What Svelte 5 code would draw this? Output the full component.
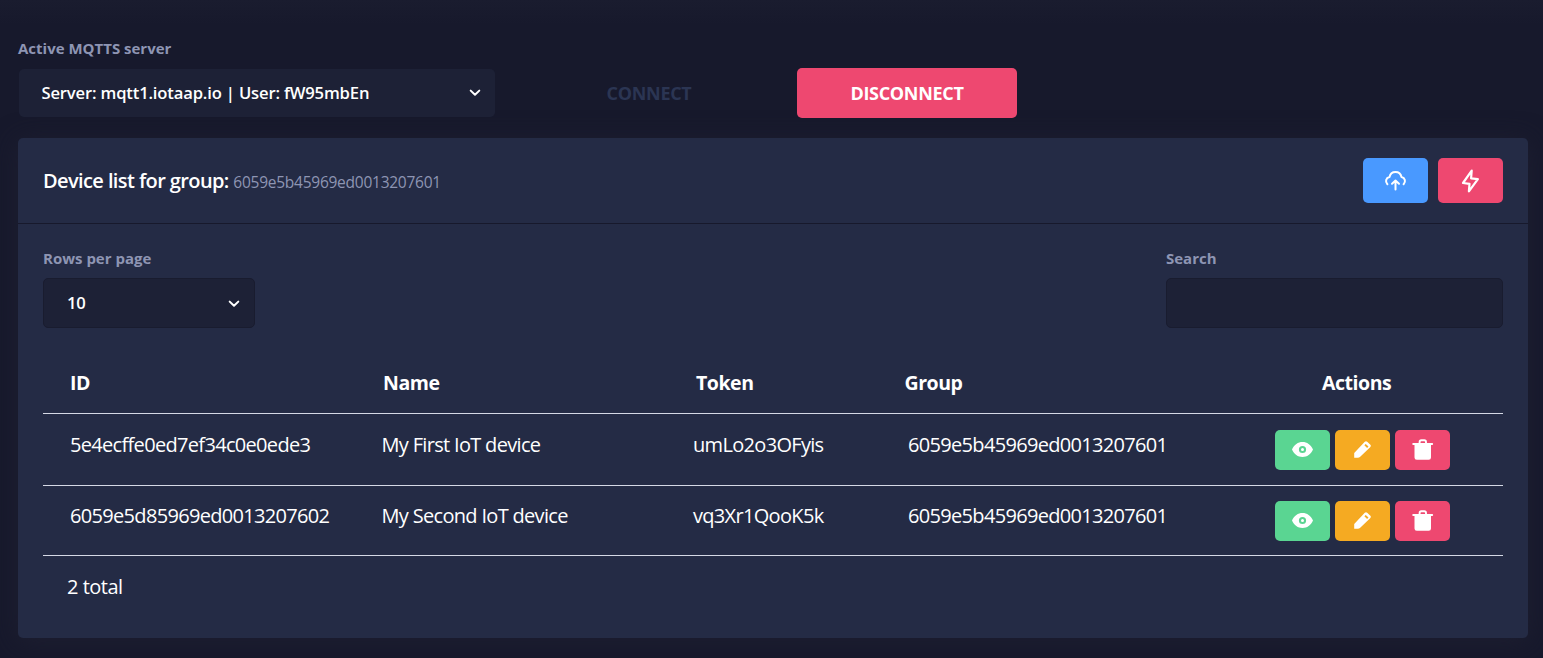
<script>
  const columns = ['ID', 'Name', 'Token', 'Group', 'Actions'];
  const devices = [
    { id: '5e4ecffe0ed7ef34c0e0ede3', name: 'My First IoT device', token: 'umLo2o3OFyis', group: '6059e5b45969ed0013207601' },
    { id: '6059e5d85969ed0013207602', name: 'My Second IoT device', token: 'vq3Xr1QooK5k', group: '6059e5b45969ed0013207601' }
  ];
</script>

{#snippet chevron()}
  <svg class="chevron" viewBox="0 0 12 8" width="12" height="8"><path d="M1.7 1.6 6 5.8l4.3-4.2" fill="none" stroke="#fff" stroke-width="2" stroke-linecap="round" stroke-linejoin="round" /></svg>
{/snippet}

<div class="page">
  <div class="label server-label">Active MQTTS server</div>
  <div class="connection">
    <button class="select server"><span>Server: mqtt1.iotaap.io | User: fW95mbEn</span> {@render chevron()}</button>
    <button class="connect" disabled>CONNECT</button>
    <button class="disconnect">DISCONNECT</button>
  </div>

  <section class="card">
    <header>
      <h1>Device list for group: <small>6059e5b45969ed0013207601</small></h1>
      <div class="tools">
        <button class="tool blue" aria-label="Upload">
          <svg viewBox="0 0 24 24" width="24" height="24" fill="none" stroke="#fff" stroke-width="2" stroke-linecap="round" stroke-linejoin="round">
            <path d="M3.4 15.2C1 12.700 1.800 8.800 5.500 8.100 6.200 4.700 8.800 3 11.500 3s5.300 1.700 6 5.100c3.700.7 4.500 4.600 2.100 7.100M11.500 20.500v-8.300M8 14.800 11.500 11.500l3.500 3.300" />
          </svg>
        </button>
        <button class="tool pink" aria-label="Flash">
          <svg viewBox="0 0 24 24" width="24" height="24" fill="none" stroke="#fff" stroke-width="2.2" stroke-linecap="round" stroke-linejoin="round">
            <path d="M12.700 1.700 4 14l6.500.9-.6 7.400L18.900 10.200l-6.800-.8z" />
          </svg>
        </button>
      </div>
    </header>

    <div class="filters">
      <div>
        <div class="label">Rows per page</div>
        <button class="select rows"><span>10</span> {@render chevron()}</button>
      </div>
      <div>
        <div class="label">Search</div>
        <input class="search" aria-label="Search" />
      </div>
    </div>

    <div class="table">
      <div class="row head">
        {#each columns as column}<div>{column}</div>{/each}
      </div>
      {#each devices as device}
        <div class="row body">
          <div>{device.id}</div>
          <div>{device.name}</div>
          <div>{device.token}</div>
          <div>{device.group}</div>
          <div class="actions">
            <button class="green" aria-label="View">
              <svg viewBox="0 0 22 16" width="22" height="16"><path fill="#fff" fill-rule="evenodd" d="M0 7.500C2.200 2.700 6 .1 10.500.1S18.800 2.700 21 7.500C18.800 12.300 15.100 15 10.500 15S2.200 12.300 0 7.500zM10.500 3.900a3.600 3.600 0 1 0 0 7.200 3.600 3.600 0 0 0 0-7.200z" /><circle cx="10.500" cy="7.500" r="1.500" fill="#fff" /></svg>
            </button>
            <button class="orange" aria-label="Edit">
              <svg viewBox="0 0 20 20" width="20" height="20"><path fill="#fff" fill-rule="evenodd" d="M1.200 17.800V13L11.800 1.700q1.200-1.100 2.400 0l3.200 3q1 1.100 0 2.300L7.200 16.800q-1 1-2.500 1zM12.700 4l-1.300 1.300 2.700 2.700 1.400-1.400z" /></svg>
            </button>
            <button class="pink" aria-label="Delete">
              <svg viewBox="0 0 22 22" width="22" height="22"><path fill="#fff" d="M2.500 5h16.500v13.500q0 2.300-2.300 2.300H4.800q-2.300 0-2.300-2.300z" /><path d="M1.200 5h19M7.600 4.500V3q0-1.700 1.700-1.700h3q1.700 0 1.700 1.700v1.500" fill="none" stroke="#fff" stroke-width="1.900" stroke-linecap="round" /></svg>
            </button>
          </div>
        </div>
      {/each}
      <div class="total">2 total</div>
    </div>
  </section>
</div>

<style>
  :global(body) { background: #17192c; }
  .page {
    box-sizing: border-box;
    width: 1543px;
    height: 658px;
    padding: 38px 15px 0 18px;
    overflow: hidden;
    color: #fff;
    font-family: "Open Sans", sans-serif;
    background: linear-gradient(#1a1c2f, #17192c 24px);
  }
  button, input { box-sizing: border-box; border: 0; margin: 0; padding: 0; font-family: inherit; color: #fff; border-radius: 5px; }
  .label { height: 20px; font-size: 15px; line-height: 20px; font-weight: 700; color: #8e95b3; }
  .connection { display: flex; align-items: center; height: 50px; margin-top: 10px; }
  .select { display: flex; align-items: center; justify-content: space-between; background: #1d2136; font-size: 16.6px; line-height: 24px; font-weight: 600; letter-spacing: -0.16px; }
  .server { width: 476px; height: 48px; margin-left: 1px; padding: 0 14px 0 22.5px; }
  .connect, .disconnect { height: 50px; font-size: 18px; font-weight: 700; letter-spacing: -0.3px; }
  .connect { width: 220px; margin-left: 44px; background: none; color: #2b3553; }
  .disconnect { width: 220px; margin-left: 38px; background: #ee4870; }

  .card { box-sizing: border-box; width: 1510px; height: 500px; margin-top: 20px; border-radius: 5px; background: #242b45; box-shadow: 0 3px 26px #1e1f31; }
  header { box-sizing: border-box; display: flex; justify-content: space-between; align-items: center; height: 86px; padding: 0 25px; border-bottom: 1px solid #17192c; }
  h1 { margin: 2px 0 0; font-size: 20px; line-height: 30px; font-weight: 600; letter-spacing: -0.6px; }
  small { font-size: 15.5px; font-weight: 400; letter-spacing: -0.25px; color: #8e95b3; }
  .tools { display: flex; gap: 10px; }
  .tool { display: flex; align-items: center; justify-content: center; width: 65px; height: 45px; }
  .blue { background: #4999ff; }
  .pink { background: #ee4870; }
  .green { background: #5ad592; }
  .orange { background: #f5aa22; }

  .filters { display: flex; justify-content: space-between; padding: 24px 25px 0; }
  .filters .label { margin-bottom: 10px; }
  .rows { width: 212px; height: 50px; padding: 0 14.5px 0 23px; border: 1px solid #191c2f; }
  .rows svg { margin-top: 2px; }
  .search { width: 337px; height: 50px; background: #1d2136; border: 1px solid #191c2f; display: block; }

  .table { margin: 24px 25px 0; font-size: 20px; line-height: 30px; letter-spacing: -0.68px; }
  .row { box-sizing: border-box; display: grid; grid-template-columns: 311.5px 311.500px 215px 324px 1fr; padding-left: 27px; border-bottom: 1px solid #d5d9e5; }
  .head { grid-template-columns: 313px 313px 208.500px 417.500px 1fr; height: 62px; padding-top: 16px; font-size: 19.5px; font-weight: 700; letter-spacing: -0.45px; }
  .body { height: 72px; padding-top: 16px; }
  .body + .body { height: 70px; padding-top: 15px; }
  .actions { display: flex; gap: 5px; padding: 0 0 0 43px; }
  .actions button { display: flex; align-items: center; justify-content: center; width: 55px; height: 40px; }
  .total { padding: 16px 24px; letter-spacing: -0.5px; }
</style>
